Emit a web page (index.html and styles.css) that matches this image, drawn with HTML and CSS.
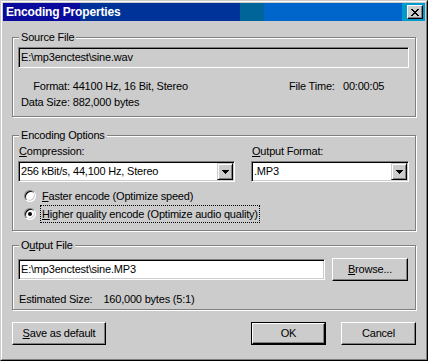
FILE: index.html
```html
<!DOCTYPE html>
<html>
<head>
<meta charset="utf-8">
<link rel="stylesheet" href="styles.css">
</head>
<body>
<div class="window">
  <div class="frame">
    <div class="titlebar">
      <span class="title">Encoding Properties</span>
      <span class="close"><svg width="8" height="7" viewBox="0 0 8 7"><path d="M0 0h2v1h-2zM6 0h2v1h-2zM1 1h2v1h-2zM5 1h2v1h-2zM2 2h4v1h-4zM3 3h2v1h-2zM2 4h4v1h-4zM1 5h2v1h-2zM5 5h2v1h-2zM0 6h2v1h-2zM6 6h2v1h-2z" fill="#000"/></svg></span>
    </div>
    <div class="body">
      <div class="group source">
        <div class="legend">Source File</div>
        <div class="field ro">E:\mp3enctest\sine.wav</div>
        <div class="info">
          <span class="k">Format:</span><span class="v">44100 Hz, 16 Bit, Stereo</span><span class="k2">File Time:</span><span class="v">00:00:05</span>
          <span class="k">Data Size:</span><span class="v">882,000 bytes</span><span></span><span></span>
        </div>
      </div>

      <div class="group encoding">
        <div class="legend">Encoding Options</div>
        <div class="cols">
          <div class="col c1">
            <div class="lbl"><u>C</u>ompression:</div>
            <div class="combo"><span class="ctext">256 kBit/s, 44,100 Hz, Stereo</span><span class="dd"><svg width="7" height="4" viewBox="0 0 7 4"><path d="M0 0h7v1h-7zM1 1h5v1h-5zM2 2h3v1h-3zM3 3h1v1h-1z" fill="#000"/></svg></span></div>
          </div>
          <div class="col c2">
            <div class="lbl"><u>O</u>utput Format:</div>
            <div class="combo"><span class="ctext">.MP3</span><span class="dd"><svg width="7" height="4" viewBox="0 0 7 4"><path d="M0 0h7v1h-7zM1 1h5v1h-5zM2 2h3v1h-3zM3 3h1v1h-1z" fill="#000"/></svg></span></div>
          </div>
        </div>
        <div class="opts">
          <div class="opt"><span class="radio"></span><span class="otext"><u>F</u>aster encode (Optimize speed)</span></div>
          <div class="opt"><span class="radio on"></span><span class="otext focus"><u>H</u>igher quality encode (Optimize audio quality)</span></div>
        </div>
      </div>

      <div class="group output">
        <div class="legend">O<u>u</u>tput File</div>
        <div class="orow">
          <div class="field out">E:\mp3enctest\sine.MP3</div>
          <div class="btn browse"><u>B</u>rowse...</div>
        </div>
        <div class="est"><span class="ek">Estimated Size:</span><span>160,000 bytes (5:1)</span></div>
      </div>

      <div class="buttons">
        <div class="btn save"><u>S</u>ave as default</div>
        <div class="spacer"></div>
        <div class="default"><div class="btn ok">OK</div></div>
        <div class="btn cancel">Cancel</div>
      </div>
    </div>
  </div>
</div>
</body>
</html>
```

FILE: styles.css
```css
* { box-sizing: border-box; }
body {
  margin: 0;
  background: #cccccc;
  font-family: "Liberation Sans", Arial, sans-serif;
  font-size: 11px;
  line-height: 13px;
  letter-spacing: -0.2px;
  color: #000;
}
u { text-decoration: underline; text-underline-offset: 1px; }
.window {
  width: 428px;
  height: 361px;
  border: 1px solid;
  border-color: #cccccc #000 #000 #cccccc;
  background: #cccccc;
}
.frame {
  height: 100%;
  border: 1px solid;
  border-color: #fff #808080 #808080 #fff;
  padding: 1px;
  display: flex;
  flex-direction: column;
}
.titlebar {
  height: 18px;
  flex: none;
  display: flex;
  align-items: center;
  justify-content: space-between;
  padding: 0 2px 0 3px;
  background: linear-gradient(to right, #0a0a9c 0 77px, #003399 77px 237px, #006699 237px 261px, #0066cc 261px 399px, #0099cc 399px);
}
.title {
  color: #fff;
  font-weight: bold;
  font-size: 12px;
  letter-spacing: -0.15px;
}
.close {
  width: 16px;
  height: 14px;
  background: #cccccc;
  border: 1px solid;
  border-color: #fff #000 #000 #fff;
  box-shadow: inset -1px -1px 0 #808080;
  display: flex;
  align-items: center;
  justify-content: center;
}
.close svg { display: block; }
.body {
  flex: 1;
  display: flex;
  flex-direction: column;
  padding: 16px 9px 0;
}
.group {
  border: 1px solid #808080;
  box-shadow: inset 1px 1px 0 #fff, 1px 1px 0 #fff;
  display: flex;
  flex-direction: column;
  padding: 0 6px 6px 5px;
}
.legend {
  align-self: flex-start;
  margin: -7px 0 0 1px;
  padding: 0 2px;
  background: #cccccc;
  line-height: 13px;
}
.field {
  height: 21px;
  border: 1px solid;
  border-color: #808080 #fff #fff #808080;
  box-shadow: inset 1px 1px 0 #000, inset -1px -1px 0 #cccccc;
  padding: 0 2px;
  display: flex;
  align-items: center;
  background: #fff;
  white-space: nowrap;
}
.field.ro { background: #cccccc; margin-top: 3px; }
.info {
  display: grid;
  grid-template-columns: auto 1fr 54px 66px;
  row-gap: 3px;
  margin-top: 12px;
  padding-left: 3px;
}
.k { text-align: right; padding-right: 3px; white-space: nowrap; }
.k2, .v { white-space: nowrap; }
.source { height: 80px; }
.encoding { margin-top: 18px; height: 96px; }
.cols {
  display: flex;
  gap: 16px;
  margin-top: 3px;
}
.col { display: flex; flex-direction: column; gap: 3px; }
.c1 { width: 217px; }
.c2 { width: 158px; }
.lbl { padding-left: 1px; }
.combo {
  height: 21px;
  display: flex;
  border: 1px solid;
  border-color: #808080 #fff #fff #808080;
  box-shadow: inset 1px 1px 0 #000, inset -1px -1px 0 #cccccc;
  padding: 1px;
  background: #fff;
}
.ctext {
  flex: 1;
  display: flex;
  align-items: center;
  padding-left: 1px;
  white-space: nowrap;
}
.dd {
  width: 16px;
  flex: none;
  border: 1px solid;
  border-color: #cccccc #000 #000 #cccccc;
  box-shadow: inset 1px 1px 0 #fff, inset -1px -1px 0 #808080;
  background: #cccccc;
  display: flex;
  align-items: center;
  justify-content: center;
}
.dd svg { display: block; }
.opts { margin-top: 5px; display: flex; flex-direction: column; }
.opt {
  height: 18px;
  display: flex;
  align-items: center;
  padding-left: 6px;
}
.radio {
  width: 12px;
  height: 12px;
  flex: none;
  border-radius: 50%;
  background: #fff;
  border: 1px solid;
  border-color: #808080 #fff #fff #808080;
  box-shadow: inset 1px 1px 0 #000, inset -1px -1px 0 #cccccc;
  display: flex;
  align-items: center;
  justify-content: center;
  margin-right: 4px;
}
.radio.on::after {
  content: "";
  width: 4px;
  height: 4px;
  border-radius: 50%;
  background: #000;
}
.otext {
  height: 18px;
  display: flex;
  align-items: center;
  padding: 0 1px;
  border: 1px dotted transparent;
  white-space: nowrap;
}
.otext.focus { border-color: #000; }
.output { margin-top: 14px; height: 65px; }
.orow {
  display: flex;
  align-items: center;
  gap: 7px;
  margin-top: 6px;
}
.field.out { width: 307px; }
.btn {
  height: 23px;
  display: flex;
  align-items: center;
  justify-content: center;
  background: #cccccc;
  border: 1px solid;
  border-color: #fff #000 #000 #fff;
  box-shadow: inset -1px -1px 0 #808080;
  white-space: nowrap;
}
.browse { width: 76px; }
.est { margin-top: 12px; padding-left: 1px; display: flex; gap: 11px; }
.buttons {
  display: flex;
  align-items: center;
  margin-top: 12px;
}
.spacer { flex: 1; }
.save { width: 94px; }
.default { border: 1px solid #000; }
.ok { width: 73px; height: 21px; }
.cancel { width: 75px; margin-left: 15px; }
```
